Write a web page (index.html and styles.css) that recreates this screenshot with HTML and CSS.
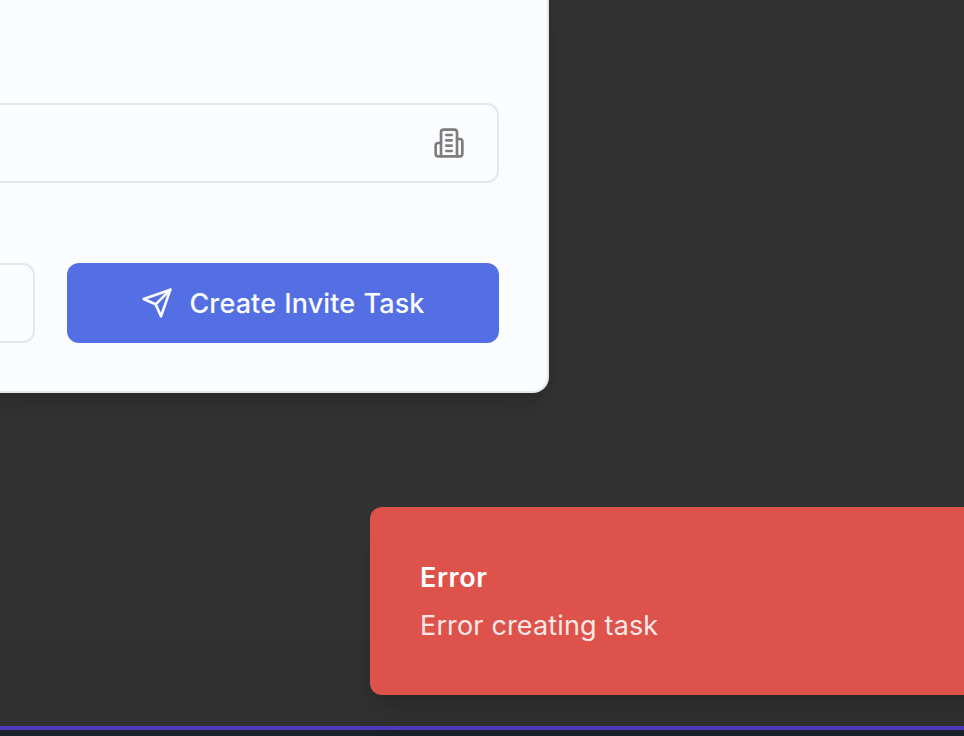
FILE: index.html
```html
<!DOCTYPE html>
<html lang="en">
<head>
<meta charset="utf-8">
<title>Create Invite Task</title>
<link rel="stylesheet" href="styles.css">
</head>
<body>
<main class="screen">
  <div class="divider"></div>
  <footer class="footer"></footer>
  <section class="dialog">
    <div class="field">
      <svg class="icon" viewBox="0 0 24 24"><path d="M6 22V4a2 2 0 0 1 2-2h8a2 2 0 0 1 2 2v18Z"/><path d="M6 12H4a2 2 0 0 0-2 2v6a2 2 0 0 0 2 2h2"/><path d="M18 9h2a2 2 0 0 1 2 2v9a2 2 0 0 1-2 2h-2"/><path d="M10 6h4"/><path d="M10 10h4"/><path d="M10 14h4"/><path d="M10 18h4"/></svg>
    </div>
    <div class="actions">
      <button class="cancel" aria-label="Cancel"></button>
      <button class="submit">
        <svg class="icon" viewBox="0 0 24 24"><path d="m22 2-7 20-4-9-9-4Z"/><path d="M22 2 11 13"/></svg>
        <span class="label">Create Invite Task</span>
      </button>
    </div>
  </section>
  <aside class="toast" role="alert">
    <div class="toast-title">Error</div>
    <div class="toast-text">Error creating task</div>
  </aside>
</main>
</body>
</html>
```
FILE: styles.css
```css
* { box-sizing: border-box; }
body { margin: 0; font-family: Inter, sans-serif; font-size: 27px; line-height: 40px; letter-spacing: .15px; }
.screen {
  position: relative;
  height: 736px;
  overflow: hidden;
  display: flex;
  flex-direction: column;
  justify-content: flex-end;
  background: #323232;
}
.divider { height: 85px; border-top: 2px solid #2e2e2e; background: #303030; }
.footer { height: 10px; border-top: 4px solid #4f39c0; background: #1a202c; }
.icon {
  width: 32px;
  height: 32px;
  flex: none;
  fill: none;
  stroke: currentColor;
  stroke-width: 2;
  stroke-linecap: round;
  stroke-linejoin: round;
}
.dialog {
  position: absolute;
  top: -20px;
  left: -20px;
  width: 569px;
  height: 413px;
  padding: 0 48px 48px 0;
  display: flex;
  flex-direction: column;
  justify-content: flex-end;
  gap: 80px;
  background: #fafcff;
  border: 2px solid #e2e8ec;
  border-radius: 16px;
  box-shadow: 0 20px 30px -6px rgba(0, 0, 0, .1), 0 8px 12px -4px rgba(0, 0, 0, .1);
}
.field {
  height: 80px;
  padding-right: 32px;
  display: flex;
  align-items: center;
  justify-content: flex-end;
  border: 2px solid #e2e8ec;
  border-radius: 12px;
  color: #7d7d7d;
}
.actions { display: flex; gap: 32px; }
.cancel { flex: 1; height: 80px; border: 2px solid #e2e8ec; border-radius: 12px; background: transparent; }
.submit {
  width: 432px;
  height: 80px;
  padding: 0;
  display: flex;
  align-items: center;
  justify-content: center;
  gap: 16px;
  border: 0;
  border-radius: 12px;
  background: #546ee4;
  color: #fafcff;
  font: inherit;
  font-weight: 450;
  letter-spacing: .13px;
  word-spacing: .8px;
}
.label { padding-top: 1px; }
.toast {
  position: absolute;
  top: 507px;
  left: 370px;
  width: 720px;
  height: 188px;
  padding: 51px 50px 49px;
  display: flex;
  flex-direction: column;
  gap: 8px;
  border-radius: 12px;
  background: #de524c;
  color: #fff;
  box-shadow: 0 20px 30px -6px rgba(0, 0, 0, .1), 0 8px 12px -4px rgba(0, 0, 0, .1);
}
.toast-title { font-weight: 600; letter-spacing: .6px; }
.toast-text { opacity: .87; }
```
